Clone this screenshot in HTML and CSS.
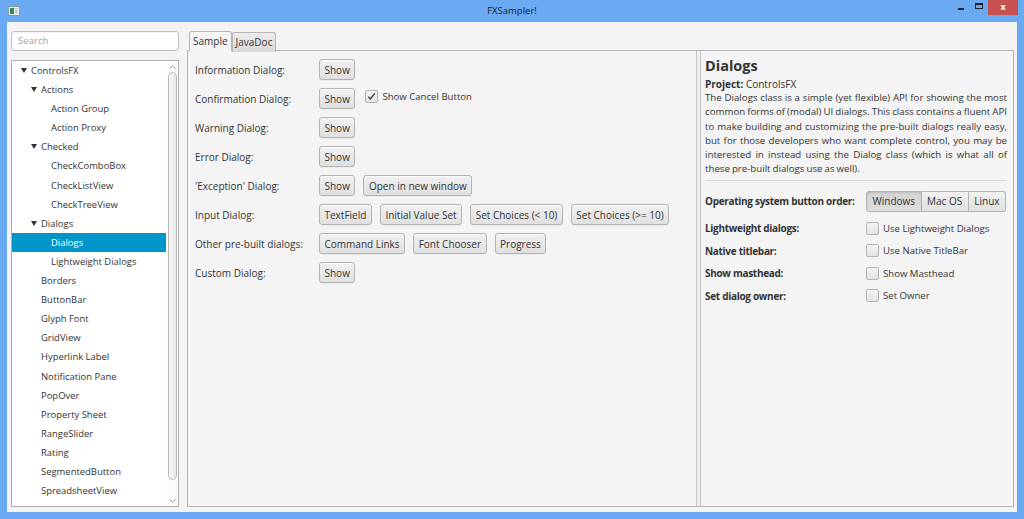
FILE: index.html
```html
<!DOCTYPE html>
<html lang="en">
<head>
<meta charset="utf-8">
<title>FXSampler!</title>
<link rel="stylesheet" href="styles.css">
</head>
<body>
<div class="window">
  <header class="titlebar">
    <div class="tb-left">
      <svg class="app-icon" width="12" height="10" viewBox="0 0 12 10">
        <rect x="0.5" y="0.5" width="11" height="9" fill="#f2f2f2" stroke="#8c99a6"/>
        <rect x="2" y="2" width="4" height="6" fill="#2f8f5b"/>
        <rect x="7" y="2" width="3" height="6" fill="#c9d3dc"/>
      </svg>
    </div>
    <div class="title">FXSampler!</div>
    <div class="wincontrols">
      <span class="wc-min"></span>
      <span class="wc-max"></span>
      <span class="wc-close">x</span>
    </div>
  </header>

  <div class="client">
    <aside class="sidebar">
      <div class="search">Search</div>
      <div class="tree">
        <div class="rows">
          <div class="row a0"><span class="arrow"></span>ControlsFX</div>
          <div class="row a1"><span class="arrow"></span>Actions</div>
          <div class="row l2">Action Group</div>
          <div class="row l2">Action Proxy</div>
          <div class="row a1"><span class="arrow"></span>Checked</div>
          <div class="row l2">CheckComboBox</div>
          <div class="row l2">CheckListView</div>
          <div class="row l2">CheckTreeView</div>
          <div class="row a1"><span class="arrow"></span>Dialogs</div>
          <div class="row l2 sel">Dialogs</div>
          <div class="row l2">Lightweight Dialogs</div>
          <div class="row l1">Borders</div>
          <div class="row l1">ButtonBar</div>
          <div class="row l1">Glyph Font</div>
          <div class="row l1">GridView</div>
          <div class="row l1">Hyperlink Label</div>
          <div class="row l1">Notification Pane</div>
          <div class="row l1">PopOver</div>
          <div class="row l1">Property Sheet</div>
          <div class="row l1">RangeSlider</div>
          <div class="row l1">Rating</div>
          <div class="row l1">SegmentedButton</div>
          <div class="row l1">SpreadsheetView</div>
          <div class="row l1">TextFields</div>
        </div>
        <div class="vscroll">
          <span class="sb-btn"><svg width="7" height="4" viewBox="0 0 7 4"><polyline points="0.5,3.5 3.5,0.8 6.5,3.5" fill="none" stroke="#9a9a9a" stroke-width="1"/></svg></span>
          <span class="sb-thumb"></span>
          <span class="sb-track"></span>
          <span class="sb-btn"><svg width="7" height="4" viewBox="0 0 7 4"><polyline points="0.5,0.5 3.5,3.2 6.5,0.5" fill="none" stroke="#9a9a9a" stroke-width="1"/></svg></span>
        </div>
      </div>
    </aside>

    <main class="tabpane">
      <nav class="tabs">
        <div class="tab active">Sample</div>
        <div class="tab">JavaDoc</div>
      </nav>
      <div class="tabcontent">
        <section class="sample">
          <div class="lbl">Information Dialog:</div>
          <div class="ctrls"><button class="btn">Show</button></div>

          <div class="lbl">Confirmation Dialog:</div>
          <div class="ctrls">
            <button class="btn">Show</button>
            <label class="check top">
              <span class="cb"><svg width="11" height="11" viewBox="0 0 11 11"><polyline points="2.2,5.6 4.4,8 8.8,2.4" fill="none" stroke="#3a3a3a" stroke-width="1.4"/></svg></span>
              <span>Show Cancel Button</span>
            </label>
          </div>

          <div class="lbl">Warning Dialog:</div>
          <div class="ctrls"><button class="btn">Show</button></div>

          <div class="lbl">Error Dialog:</div>
          <div class="ctrls"><button class="btn">Show</button></div>

          <div class="lbl">'Exception' Dialog:</div>
          <div class="ctrls"><button class="btn">Show</button><button class="btn">Open in new window</button></div>

          <div class="lbl">Input Dialog:</div>
          <div class="ctrls">
            <button class="btn">TextField</button>
            <button class="btn">Initial Value Set</button>
            <button class="btn">Set Choices (&lt; 10)</button>
            <button class="btn">Set Choices (&gt;= 10)</button>
          </div>

          <div class="lbl">Other pre-built dialogs:</div>
          <div class="ctrls">
            <button class="btn">Command Links</button>
            <button class="btn">Font Chooser</button>
            <button class="btn">Progress</button>
          </div>

          <div class="lbl">Custom Dialog:</div>
          <div class="ctrls"><button class="btn">Show</button></div>
        </section>

        <div class="divider"></div>

        <section class="info">
          <h1 class="heading">Dialogs</h1>
          <div class="project"><b>Project:</b> ControlsFX</div>
          <div class="desc">
            <span class="line">The Dialogs class is a simple (yet flexible) API for showing the most</span>
            <span class="line">common forms of (modal) UI dialogs. This class contains a fluent API</span>
            <span class="line">to make building and customizing the pre-built dialogs really easy,</span>
            <span class="line">but for those developers who want complete control, you may be</span>
            <span class="line">interested in instead using the Dialog class (which is what all of</span>
            <span class="line last">these pre-built dialogs use as well).</span>
          </div>
          <div class="sep"></div>
          <div class="settings">
            <div class="srow first">
              <div class="slbl">Operating system button order:</div>
              <div class="segmented">
                <span class="seg pressed">Windows</span>
                <span class="seg">Mac OS</span>
                <span class="seg">Linux</span>
              </div>
            </div>
            <div class="srow">
              <div class="slbl">Lightweight dialogs:</div>
              <label class="check"><span class="cb"></span>Use Lightweight Dialogs</label>
            </div>
            <div class="srow">
              <div class="slbl">Native titlebar:</div>
              <label class="check"><span class="cb"></span>Use Native TitleBar</label>
            </div>
            <div class="srow">
              <div class="slbl">Show masthead:</div>
              <label class="check"><span class="cb"></span>Show Masthead</label>
            </div>
            <div class="srow">
              <div class="slbl">Set dialog owner:</div>
              <label class="check"><span class="cb"></span>Set Owner</label>
            </div>
          </div>
        </section>
      </div>
    </main>
  </div>
</div>
</body>
</html>
```

FILE: styles.css
```css
* { box-sizing: border-box; margin: 0; padding: 0; }
html, body { width: 1024px; height: 519px; overflow: hidden; }
body {
  background: #6aaaf2;
  font-family: "Open Sans", "Noto Sans", sans-serif;
  font-size: 10px;
  color: #333;
}

.window { display: flex; flex-direction: column; height: 519px; }

/* title bar */
.titlebar {
  height: 22px;
  display: grid;
  grid-template-columns: 1fr auto 1fr;
  align-items: start;
}
.tb-left { display: flex; }
.app-icon { margin: 6px 0 0 8px; }
.title { font-size: 9.5px; line-height: 22px; color: #1c1c1c; }
.wincontrols { justify-self: end; display: flex; align-items: flex-start; margin-right: 6px; }
.wc-min { width: 6px; height: 2px; background: #1f1f1f; margin-top: 8px; }
.wc-max { width: 8px; height: 6px; border: 1px solid #1f1f1f; border-top-width: 2px; margin: 3px 5px 0 11px; }
.wc-close {
  width: 30px; height: 15px; background: #c75050; color: #fff;
  font-size: 9px; font-weight: bold; line-height: 14px; text-align: center;
}

/* client area */
.client {
  display: flex;
  height: 490px;
  margin: 0 7px;
  background: #f4f4f4;
}

.sidebar {
  flex: none;
  width: 172px;
  padding: 9px 0 5px 4px;
  display: flex;
  flex-direction: column;
}
.search {
  height: 20px;
  margin-bottom: 9px;
  border: 1px solid #c2c2c2;
  border-radius: 3px;
  background: #fff;
  box-shadow: inset 0 1px 1px rgba(0,0,0,0.05);
  padding-left: 6px;
  line-height: 18px;
  font-size: 9.6px;
  color: #a6a6a6;
}
.tree {
  flex: 1;
  display: flex;
  border: 1px solid #b0b0b0;
  background: #fff;
  overflow: hidden;
}
.rows { flex: 1; overflow: hidden; font-size: 9.45px; }
.row { height: 19.1px; line-height: 19.1px; white-space: nowrap; }
.row.a0 { padding-left: 9px; }
.row.a1 { padding-left: 19px; }
.row.l1 { padding-left: 29px; }
.row.l2 { padding-left: 39px; }
.row.sel { background: #0096c9; color: #fff; }
.arrow {
  display: inline-block;
  width: 0; height: 0;
  border-left: 3px solid transparent;
  border-right: 3px solid transparent;
  border-top: 5px solid #333;
  margin-right: 4px;
  vertical-align: 1px;
}

.vscroll {
  width: 12px;
  display: flex;
  flex-direction: column;
  align-items: center;
  background: #fbfbfb;
}
.sb-btn { height: 11px; display: flex; align-items: center; justify-content: center; }
.sb-thumb {
  width: 9px;
  height: 408px;
  border: 1px solid #b8b8b8;
  border-radius: 5px;
  background: linear-gradient(to right, #f6f6f6, #e6e6e6);
}
.sb-track { flex: 1; }

/* tab pane */
.tabpane {
  flex: none;
  width: 827px;
  margin-left: 8px;
  padding: 9px 0 5px;
  display: flex;
  flex-direction: column;
}
.tabs { display: flex; padding-left: 2px; height: 19px; }
.tab {
  height: 20px;
  padding: 0 3px;
  line-height: 18px;
  border: 1px solid #b5b5b5;
  border-bottom: none;
  border-radius: 3px 3px 0 0;
  background: linear-gradient(#ececec, #d9d9d9);
  margin-top: 1px;
  position: relative;
}
.tab.active {
  background: #f4f4f4;
  margin-top: 0;
  z-index: 1;
  box-shadow: inset 0 1px 0 #fff;
}
.tabcontent {
  flex: 1;
  display: flex;
  border: 1px solid #b5b5b5;
  background: #f4f4f4;
  min-height: 0;
}

.sample {
  flex: none;
  width: 508px;
  padding: 8px 0 0 7px;
  display: grid;
  grid-template-columns: 116px auto;
  grid-auto-rows: 21px;
  column-gap: 8px;
  row-gap: 8px;
  align-content: start;
}
.lbl { display: flex; align-items: center; white-space: nowrap; }
.ctrls { display: flex; gap: 8px; align-items: stretch; }

.btn {
  font: inherit;
  color: #333;
  height: 21px;
  padding: 0 4.5px;
  border: 1px solid #b3b3b3;
  border-radius: 3px;
  background: linear-gradient(#f1f1f1, #e0e0e0);
  box-shadow: inset 0 1px 0 rgba(255,255,255,0.8), 0 1px 0 rgba(0,0,0,0.04);
  white-space: nowrap;
}

.check { display: flex; align-items: center; gap: 4px; white-space: nowrap; font-size: 9.6px; }
.check.top { align-self: flex-start; height: 17px; margin-left: 2px; }
.cb {
  flex: none;
  width: 13px; height: 13px;
  border: 1px solid #b4b4b4;
  border-radius: 2px;
  background: linear-gradient(#f4f4f4, #e3e3e3);
  display: flex; align-items: center; justify-content: center;
}

.divider {
  flex: none;
  width: 5px;
  border-left: 1px solid #c6c6c6;
  border-right: 1px solid #c6c6c6;
  background: #f0f0f0;
}

.info {
  flex: 1;
  min-width: 0;
  padding: 5px 6px 0 4px;
}
.heading { font-size: 14.5px; font-weight: bold; line-height: 20px; color: #333; }
.project { line-height: 14.2px; margin-top: 1px; }
.project b { font-weight: bold; }
.desc { line-height: 14.2px; font-size: 9.7px; word-spacing: -0.5px; }
.line { display: block; white-space: nowrap; text-align: justify; text-align-last: justify; }
.line.last { text-align-last: left; }
.sep { margin-top: 3.5px; border-top: 1px solid #d9d9d9; }

.settings { margin-top: 10px; display: flex; flex-direction: column; }
.srow {
  display: grid;
  grid-template-columns: 161px auto;
  align-items: center;
  height: 22.5px;
}
.srow.first { height: 21px; margin-bottom: 5px; }
.slbl { font-weight: bold; white-space: nowrap; letter-spacing: -0.3px; }

.segmented { display: flex; height: 21px; }
.seg {
  padding: 0 5.5px;
  line-height: 19px;
  border: 1px solid #b3b3b3;
  border-left-width: 0;
  background: linear-gradient(#f1f1f1, #e0e0e0);
  white-space: nowrap;
}
.seg:first-child { border-left-width: 1px; border-radius: 3px 0 0 3px; }
.seg:last-child { border-radius: 0 3px 3px 0; }
.seg.pressed { background: linear-gradient(#d4d4d4, #dcdcdc); box-shadow: inset 0 1px 2px rgba(0,0,0,0.12); }
```
